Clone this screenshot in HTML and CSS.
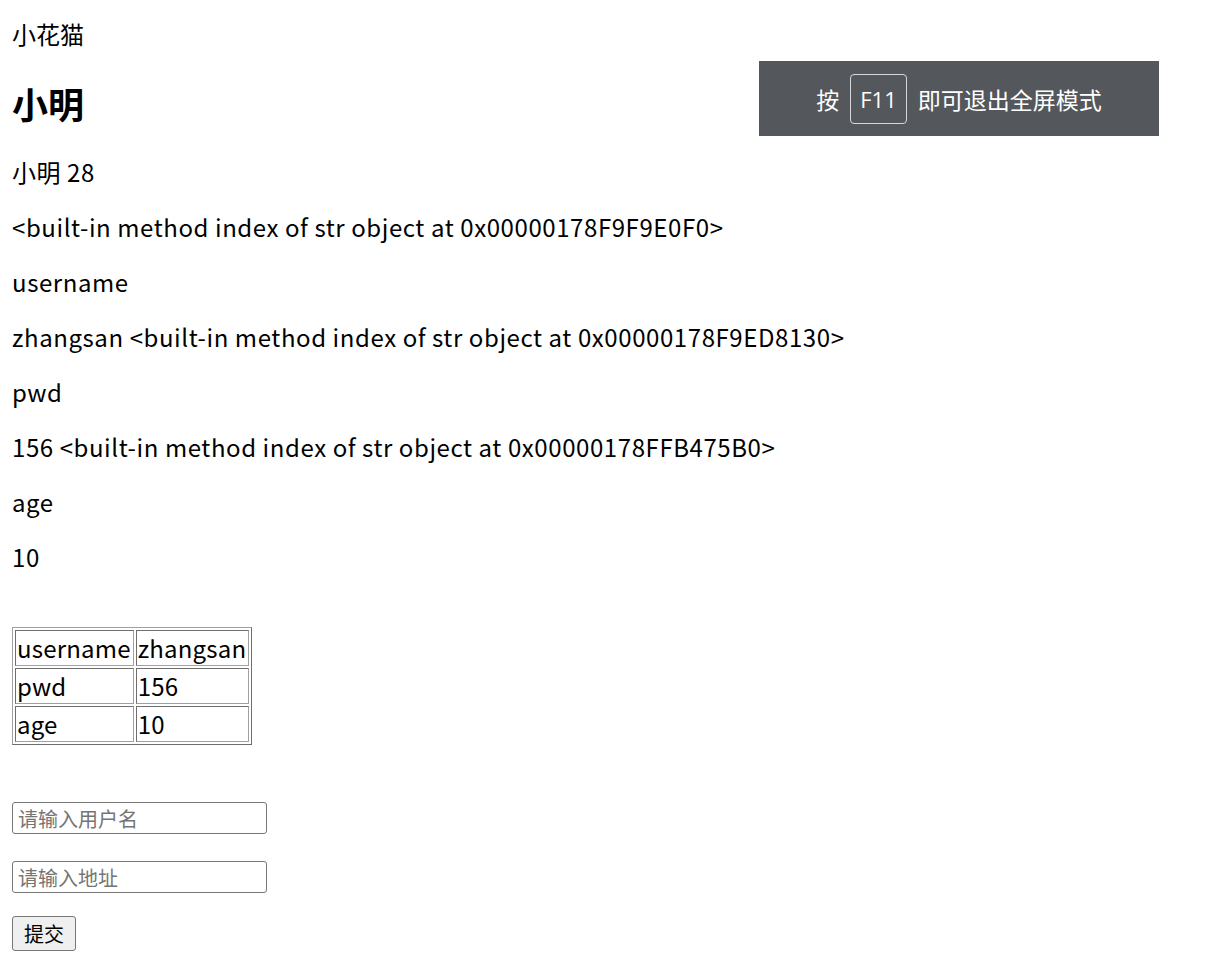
FILE: index.html
```html
<!DOCTYPE html>
<html lang="zh">
<head>
<meta charset="utf-8">
<title>小花猫</title>
<link rel="stylesheet" href="styles.css">
</head>
<body>
<div class="page">
  <div class="brand">小花猫</div>
  <h2 class="name">小明</h2>
  <p class="line">小明 28</p>
  <p class="line">&lt;built-in method index of str object at 0x00000178F9F9E0F0&gt;</p>
  <p class="line">username</p>
  <p class="line">zhangsan &lt;built-in method index of str object at 0x00000178F9ED8130&gt;</p>
  <p class="line">pwd</p>
  <p class="line">156 &lt;built-in method index of str object at 0x00000178FFB475B0&gt;</p>
  <p class="line">age</p>
  <p class="line">10</p>
  <table class="info">
    <tr><td>username</td><td>zhangsan</td></tr>
    <tr><td>pwd</td><td>156</td></tr>
    <tr><td>age</td><td>10</td></tr>
  </table>
  <form class="form">
    <div class="field"><input class="input" type="text" placeholder="请输入用户名"></div>
    <div class="field"><input class="input" type="text" placeholder="请输入地址"></div>
    <div class="field"><button class="btn" type="button">提交</button></div>
  </form>
</div>
<div class="toast">
  <span class="toast-text">按</span>
  <span class="key">F11</span>
  <span class="toast-text">即可退出全屏模式</span>
</div>
</body>
</html>
```
FILE: styles.css
```css
html, body {
  margin: 0;
  padding: 0;
  background: #fff;
}
body {
  font-family: "Noto Sans CJK SC", "Noto Sans", sans-serif;
  color: #000;
}
.page {
  padding: 18px 12px 0;
  font-size: 24px;
  line-height: 31px;
}
.brand {
  line-height: 31px;
}
.name {
  font-size: 36px;
  line-height: 47px;
  font-weight: 700;
  margin: 31px 0 29px;
}
.line {
  margin: 0 0 24px;
  line-height: 31px;
  letter-spacing: 0.58px;
}
.info {
  margin-top: 55px;
  border-collapse: separate;
  border-spacing: 2px;
  border: 1px solid #808080;
  border-color: #a0a0a0 #6e6e6e #6e6e6e #a0a0a0;
}
.info td {
  border: 1px solid #6e6e6e;
  border-color: #6e6e6e #a0a0a0 #a0a0a0 #6e6e6e;
  padding: 1px 2px 1px 1px;
  line-height: 32px;
  font-size: 24px;
  letter-spacing: 0.2px;
}
.form {
  margin-top: 57px;
}
.field + .field {
  margin-top: 27px;
}
.field:last-child {
  margin-top: 23px;
}
.input {
  box-sizing: border-box;
  width: 255px;
  height: 32px;
  border: 1px solid #767676;
  border-radius: 3px;
  padding: 1px 5px;
  font-family: "Noto Sans CJK SC", sans-serif;
  font-size: 20px;
  display: block;
}
.input::placeholder {
  color: #757575;
}
.btn {
  box-sizing: border-box;
  width: 64px;
  height: 35px;
  border: 1px solid #767676;
  border-radius: 3px;
  background: #efefef;
  font-family: "Noto Sans CJK SC", sans-serif;
  font-size: 20px;
  padding: 0;
  color: #000;
  display: block;
}
.toast {
  position: absolute;
  left: 759px;
  top: 61px;
  width: 400px;
  height: 75px;
  background: #54575b;
  color: #fff;
  display: flex;
  align-items: center;
  justify-content: center;
  gap: 11px;
  font-size: 23px;
}
.key {
  box-sizing: border-box;
  height: 50px;
  padding: 0 9px;
  border: 1px solid #d8d8d8;
  border-radius: 4px;
  display: flex;
  align-items: center;
  font-family: "Open Sans", "Noto Sans", sans-serif;
  font-size: 22px;
}
```
